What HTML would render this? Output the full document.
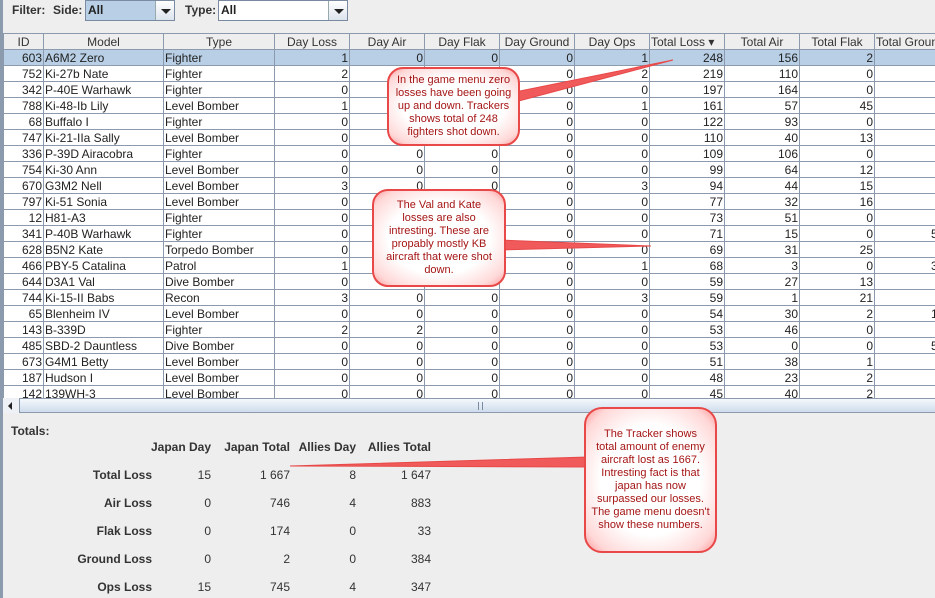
<!DOCTYPE html>
<html><head><meta charset="utf-8"><style>
*{margin:0;padding:0;box-sizing:border-box}
body{width:935px;height:598px;overflow:hidden;background:#eeeeee;font-family:"Liberation Sans",sans-serif;font-size:12px;color:#333;position:relative}
.abs{position:absolute}
.lbl{font-weight:bold;color:#333}
.combo{position:absolute;top:0;height:21px;border:1px solid #7a8aa0;background:#fff}
.combo .v{position:absolute;left:0;top:0;bottom:0;padding-left:2px;line-height:19px;font-weight:bold;color:#222}
.combo .b{position:absolute;right:0;top:0;bottom:0;width:19px;border-left:1px solid #9aa;background:linear-gradient(#fff,#dde4ee)}
.combo .b:after{content:"";position:absolute;left:5px;top:8px;border-left:5px solid transparent;border-right:5px solid transparent;border-top:5px solid #222}
table{position:absolute;left:3px;top:33px;border-collapse:collapse;table-layout:fixed;width:960px}
td,th{height:16px;border:1px solid #8c9aae;padding:0 1px;white-space:nowrap;overflow:hidden;font-weight:normal;line-height:14px;color:#222}
th{background:#eeeeee;border-color:#8c9aae;text-align:center;font-size:12px;color:#333}
td{background:#fff;text-align:right}
td.l{text-align:left}
tr.sel td{background:#b8cfe5}
.bub{position:absolute;border:2px solid #e84848;border-radius:16px;background:radial-gradient(ellipse at center,#fff 55%,#ffd8d8 85%,#ff9a9a 100%);color:#a51515;font-size:11px;text-align:center;line-height:13px;display:flex;align-items:center;justify-content:center}
.t{position:absolute;text-align:right;width:80px}
</style></head><body>
<div class="abs" style="left:0;top:0;width:3px;height:598px;background:#8c9aae"></div>
<div class="abs lbl" style="left:12px;top:3px">Filter:</div>
<div class="abs lbl" style="left:53px;top:3px">Side:</div>
<div class="combo" style="left:85px;width:90px"><div class="v" style="right:19px;background:#b8cfe5">All</div><div class="b"></div></div>
<div class="abs lbl" style="left:185px;top:3px">Type:</div>
<div class="combo" style="left:218px;width:130px"><div class="v">All</div><div class="b"></div></div>

<table>
<colgroup><col style="width:40px"><col style="width:120px"><col style="width:111px"><col style="width:75px"><col style="width:75px"><col style="width:75px"><col style="width:75px"><col style="width:75px"><col style="width:75px"><col style="width:75px"><col style="width:75px"><col style="width:89px"></colgroup>
<tr><th>ID</th><th>Model</th><th>Type</th><th>Day Loss</th><th>Day Air</th><th>Day Flak</th><th>Day Ground</th><th>Day Ops</th><th style="text-align:left">Total Loss &#9662;</th><th>Total Air</th><th>Total Flak</th><th style="text-align:left">Total Ground</th></tr>
<tr class="sel"><td>603</td><td class="l">A6M2 Zero</td><td class="l">Fighter</td><td>1</td><td>0</td><td>0</td><td>0</td><td>1</td><td>248</td><td>156</td><td>2</td><td></td></tr>
<tr><td>752</td><td class="l">Ki-27b Nate</td><td class="l">Fighter</td><td>2</td><td></td><td></td><td>0</td><td>2</td><td>219</td><td>110</td><td>0</td><td></td></tr>
<tr><td>342</td><td class="l">P-40E Warhawk</td><td class="l">Fighter</td><td>0</td><td></td><td></td><td>0</td><td>0</td><td>197</td><td>164</td><td>0</td><td></td></tr>
<tr><td>788</td><td class="l">Ki-48-Ib Lily</td><td class="l">Level Bomber</td><td>1</td><td></td><td></td><td>0</td><td>1</td><td>161</td><td>57</td><td>45</td><td></td></tr>
<tr><td>68</td><td class="l">Buffalo I</td><td class="l">Fighter</td><td>0</td><td></td><td></td><td>0</td><td>0</td><td>122</td><td>93</td><td>0</td><td></td></tr>
<tr><td>747</td><td class="l">Ki-21-IIa Sally</td><td class="l">Level Bomber</td><td>0</td><td></td><td></td><td>0</td><td>0</td><td>110</td><td>40</td><td>13</td><td></td></tr>
<tr><td>336</td><td class="l">P-39D Airacobra</td><td class="l">Fighter</td><td>0</td><td>0</td><td>0</td><td>0</td><td>0</td><td>109</td><td>106</td><td>0</td><td></td></tr>
<tr><td>754</td><td class="l">Ki-30 Ann</td><td class="l">Level Bomber</td><td>0</td><td>0</td><td>0</td><td>0</td><td>0</td><td>99</td><td>64</td><td>12</td><td></td></tr>
<tr><td>670</td><td class="l">G3M2 Nell</td><td class="l">Level Bomber</td><td>3</td><td>0</td><td>0</td><td>0</td><td>3</td><td>94</td><td>44</td><td>15</td><td></td></tr>
<tr><td>797</td><td class="l">Ki-51 Sonia</td><td class="l">Level Bomber</td><td>0</td><td>0</td><td>0</td><td>0</td><td>0</td><td>77</td><td>32</td><td>16</td><td></td></tr>
<tr><td>12</td><td class="l">H81-A3</td><td class="l">Fighter</td><td>0</td><td></td><td></td><td>0</td><td>0</td><td>73</td><td>51</td><td>0</td><td></td></tr>
<tr><td>341</td><td class="l">P-40B Warhawk</td><td class="l">Fighter</td><td>0</td><td></td><td></td><td>0</td><td>0</td><td>71</td><td>15</td><td>0</td><td style="text-align:left;padding-left:56px">5</td></tr>
<tr><td>628</td><td class="l">B5N2 Kate</td><td class="l">Torpedo Bomber</td><td>0</td><td></td><td></td><td>0</td><td>0</td><td>69</td><td>31</td><td>25</td><td></td></tr>
<tr><td>466</td><td class="l">PBY-5 Catalina</td><td class="l">Patrol</td><td>1</td><td></td><td></td><td>0</td><td>1</td><td>68</td><td>3</td><td>0</td><td style="text-align:left;padding-left:56px">3</td></tr>
<tr><td>644</td><td class="l">D3A1 Val</td><td class="l">Dive Bomber</td><td>0</td><td></td><td></td><td>0</td><td>0</td><td>59</td><td>27</td><td>13</td><td></td></tr>
<tr><td>744</td><td class="l">Ki-15-II Babs</td><td class="l">Recon</td><td>3</td><td>0</td><td>0</td><td>0</td><td>3</td><td>59</td><td>1</td><td>21</td><td></td></tr>
<tr><td>65</td><td class="l">Blenheim IV</td><td class="l">Level Bomber</td><td>0</td><td>0</td><td>0</td><td>0</td><td>0</td><td>54</td><td>30</td><td>2</td><td style="text-align:left;padding-left:56px">1</td></tr>
<tr><td>143</td><td class="l">B-339D</td><td class="l">Fighter</td><td>2</td><td>2</td><td>0</td><td>0</td><td>0</td><td>53</td><td>46</td><td>0</td><td></td></tr>
<tr><td>485</td><td class="l">SBD-2 Dauntless</td><td class="l">Dive Bomber</td><td>0</td><td>0</td><td>0</td><td>0</td><td>0</td><td>53</td><td>0</td><td>0</td><td style="text-align:left;padding-left:56px">5</td></tr>
<tr><td>673</td><td class="l">G4M1 Betty</td><td class="l">Level Bomber</td><td>0</td><td>0</td><td>0</td><td>0</td><td>0</td><td>51</td><td>38</td><td>1</td><td></td></tr>
<tr><td>187</td><td class="l">Hudson I</td><td class="l">Level Bomber</td><td>0</td><td>0</td><td>0</td><td>0</td><td>0</td><td>48</td><td>23</td><td>2</td><td></td></tr>
<tr><td>142</td><td class="l">139WH-3</td><td class="l">Level Bomber</td><td>0</td><td>0</td><td>0</td><td>0</td><td>0</td><td>45</td><td>40</td><td>2</td><td></td></tr>
</table>

<div class="abs" style="left:3px;top:398px;width:932px;height:15px;background:linear-gradient(#f4f8fc,#cfdced);border-top:1px solid #8c9aae;border-bottom:1px solid #8c9aae"></div>
<div class="abs" style="left:3px;top:398px;width:17px;height:15px;border-right:1px solid #8c9aae;background:#eef2f7"></div>
<div class="abs" style="left:8px;top:402px;border-top:4px solid transparent;border-bottom:4px solid transparent;border-right:4px solid #222"></div>
<div class="abs" style="left:478px;top:402px;width:5px;height:8px;border-left:1px solid #7a8aa0;border-right:1px solid #7a8aa0"></div>
<div class="abs" style="left:3px;top:413px;width:932px;height:185px;background:#eeeeee"></div>

<div class="abs lbl" style="left:11px;top:424px">Totals:</div>
<div class="t lbl" style="left:131px;top:440px">Japan Day</div>
<div class="t lbl" style="left:210px;top:440px">Japan Total</div>
<div class="t lbl" style="left:276px;top:440px">Allies Day</div>
<div class="t lbl" style="left:351px;top:440px">Allies Total</div>

<div class="t lbl" style="left:72px;top:468px">Total Loss</div>
<div class="t" style="left:131px;top:468px">15</div><div class="t" style="left:210px;top:468px">1 667</div><div class="t" style="left:276px;top:468px">8</div><div class="t" style="left:351px;top:468px">1 647</div>
<div class="t lbl" style="left:72px;top:496px">Air Loss</div>
<div class="t" style="left:131px;top:496px">0</div><div class="t" style="left:210px;top:496px">746</div><div class="t" style="left:276px;top:496px">4</div><div class="t" style="left:351px;top:496px">883</div>
<div class="t lbl" style="left:72px;top:524px">Flak Loss</div>
<div class="t" style="left:131px;top:524px">0</div><div class="t" style="left:210px;top:524px">174</div><div class="t" style="left:276px;top:524px">0</div><div class="t" style="left:351px;top:524px">33</div>
<div class="t lbl" style="left:52px;top:552px;width:100px">Ground Loss</div>
<div class="t" style="left:131px;top:552px">0</div><div class="t" style="left:210px;top:552px">2</div><div class="t" style="left:276px;top:552px">0</div><div class="t" style="left:351px;top:552px">384</div>
<div class="t lbl" style="left:72px;top:580px">Ops Loss</div>
<div class="t" style="left:131px;top:580px">15</div><div class="t" style="left:210px;top:580px">745</div><div class="t" style="left:276px;top:580px">4</div><div class="t" style="left:351px;top:580px">347</div>

<svg class="abs" style="left:0;top:0" width="935" height="598">
<polygon points="515,92 673,60 515,102" fill="#f05a5a" stroke="#e84848" stroke-width="1"/>
<polygon points="500,240 651,246 500,250" fill="#f05a5a" stroke="#e84848" stroke-width="1"/>
<polygon points="588,457 290,466 588,467" fill="#f05a5a" stroke="#e84848" stroke-width="1"/>
</svg>
<div class="bub" style="left:387px;top:67px;width:133px;height:79px">In the game menu zero<br>losses have been going<br>up and down. Trackers<br>shows total of 248<br>fighters shot down.</div>
<div class="bub" style="left:372px;top:189px;width:134px;height:98px">The Val and Kate<br>losses are also<br>intresting. These are<br>propably mostly KB<br>aircraft that were shot<br>down.</div>
<div class="bub" style="left:584px;top:407px;width:133px;height:146px;border-radius:18px">The Tracker shows<br>total amount of enemy<br>aircraft lost as 1667.<br>Intresting fact is that<br>japan has now<br>surpassed our losses.<br>The game menu doesn't<br>show these numbers.</div>
</body></html>
